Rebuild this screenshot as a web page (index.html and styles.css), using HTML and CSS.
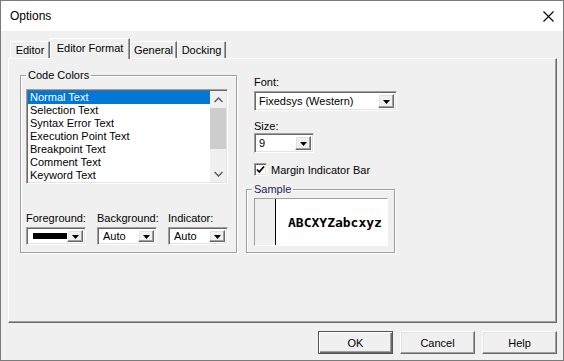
FILE: index.html
```html
<!DOCTYPE html>
<html lang="en">
<head>
  <meta charset="UTF-8">
  <title>Options</title>
  <link rel="stylesheet" href="styles.css">
</head>
<body>
  <div class="window">
    <!-- title bar -->
    <div class="titlebar">
      <span class="title">Options</span>
      <svg class="close" width="11" height="11" viewBox="0 0 11 11">
        <path d="M0.5 0.5 L10.5 10.5 M10.5 0.5 L0.5 10.5" stroke="#000" stroke-width="1.1" fill="none"/>
      </svg>
    </div>

    <div class="client">
      <!-- tabs -->
      <div class="tabs">
        <span class="tab t-editor">Editor</span>
        <span class="tab active t-format">Editor Format</span>
        <span class="tab t-general">General</span>
        <span class="tab t-docking">Docking</span>
      </div>

      <div class="panel">
        <fieldset class="group colors">
          <legend>Code Colors</legend>
          <div class="list">
            <div class="items">
              <div class="item selected">Normal Text</div>
              <div class="item">Selection Text</div>
              <div class="item">Syntax Error Text</div>
              <div class="item">Execution Point Text</div>
              <div class="item">Breakpoint Text</div>
              <div class="item">Comment Text</div>
              <div class="item">Keyword Text</div>
            </div>
            <div class="scrollbar">
              <div class="sb-btn">
                <svg width="9" height="6" viewBox="0 0 9 6"><path d="M0.5 5 L4.5 1 L8.5 5" stroke="#606060" stroke-width="1.5" fill="none"/></svg>
              </div>
              <div class="thumb"></div>
              <div class="track"></div>
              <div class="sb-btn">
                <svg width="9" height="6" viewBox="0 0 9 6"><path d="M0.5 1 L4.5 5 L8.5 1" stroke="#606060" stroke-width="1.5" fill="none"/></svg>
              </div>
            </div>
          </div>

          <div class="pickers">
            <div class="picker">
              <div class="label">Foreground:</div>
              <div class="combo small">
                <div class="value"><span class="swatch"></span></div>
                <div class="drop"><svg width="7" height="4" viewBox="0 0 7 4"><path d="M0 0 H7 L3.5 4 Z" fill="#000"/></svg></div>
              </div>
            </div>
            <div class="picker">
              <div class="label">Background:</div>
              <div class="combo small">
                <div class="value">Auto</div>
                <div class="drop"><svg width="7" height="4" viewBox="0 0 7 4"><path d="M0 0 H7 L3.5 4 Z" fill="#000"/></svg></div>
              </div>
            </div>
            <div class="picker">
              <div class="label">Indicator:</div>
              <div class="combo small">
                <div class="value">Auto</div>
                <div class="drop"><svg width="7" height="4" viewBox="0 0 7 4"><path d="M0 0 H7 L3.5 4 Z" fill="#000"/></svg></div>
              </div>
            </div>
          </div>
        </fieldset>

        <div class="side">
          <div class="label font-label">Font:</div>
          <div class="combo font">
            <div class="value">Fixedsys (Western)</div>
            <div class="drop"><svg width="7" height="4" viewBox="0 0 7 4"><path d="M0 0 H7 L3.5 4 Z" fill="#000"/></svg></div>
          </div>
          <div class="label size-label">Size:</div>
          <div class="combo size">
            <div class="value">9</div>
            <div class="drop"><svg width="7" height="4" viewBox="0 0 7 4"><path d="M0 0 H7 L3.5 4 Z" fill="#000"/></svg></div>
          </div>
          <div class="check">
            <span class="box">
              <svg width="9" height="9" viewBox="0 0 9 9"><path d="M1 4.5 L3.3 7 L8 1.5" stroke="#000" stroke-width="1.8" fill="none"/></svg>
            </span>
            <span>Margin Indicator Bar</span>
          </div>

          <fieldset class="group sample">
            <legend>Sample</legend>
            <div class="sample-box">
              <div class="margin"></div>
              <div class="sample-text">ABCXYZabcxyz</div>
            </div>
          </fieldset>
        </div>
      </div>

      <!-- dialog buttons -->
      <div class="buttons">
        <button class="btn default">OK</button>
        <button class="btn">Cancel</button>
        <button class="btn">Help</button>
      </div>
    </div>
  </div>
</body>
</html>
```

FILE: styles.css
```css
body {
  margin: 0;
  font-family: "Liberation Sans", Arial, sans-serif;
  font-size: 11px;
  color: #000;
}
.window {
  width: 564px;
  height: 361px;
  box-sizing: border-box;
  border: 1px solid #7a7a7a;
  display: flex;
  flex-direction: column;
}
.titlebar {
  height: 30px;
  background: #fff;
  display: flex;
  align-items: center;
  justify-content: space-between;
  padding: 0 9px 0 9px;
}
.title {
  font-size: 12px;
}
.client {
  flex: 1;
  background: #f0f0f0;
  padding: 7px 6px 0 7px;
}

/* tabs */
.tabs {
  display: flex;
  align-items: flex-end;
  height: 20px;
  padding-left: 2px;
}
.tab {
  height: 17px;
  line-height: 17px;
  text-align: center;
  box-sizing: border-box;
  border: 1px solid;
  border-color: #fff #696969 transparent #fff;
  border-bottom: none;
  box-shadow: inset -1px 0 #a0a0a0;
  white-space: nowrap;
  flex: none;
}
.t-editor { width: 40px; }
.t-general { width: 47px; }
.t-docking { width: 49px; }
.tab.active {
  position: relative;
  z-index: 1;
  width: 80px;
  height: 21px;
  line-height: 18px;
  margin-bottom: -1px;
  background: #f0f0f0;
}
.panel {
  height: 265px;
  box-sizing: border-box;
  border: 1px solid;
  border-color: #fff #696969 #696969 #fff;
  box-shadow: inset -1px -1px #a0a0a0;
  display: flex;
  align-items: flex-start;
  padding: 9px 0 0 11px;
}

/* group boxes */
.group {
  margin: 0;
  box-sizing: border-box;
  border: 1px solid #a0a0a0;
  box-shadow: inset 1px 1px #fff, 1px 1px #fff;
}
.group legend {
  padding: 0 2px;
  line-height: 14px;
  background: #f0f0f0;
}
.colors {
  width: 216px;
  padding: 7px 8px 7px 5px;
}
.list {
  display: flex;
  width: 202px;
  height: 95px;
  box-sizing: border-box;
  border: 1px solid;
  border-color: #a0a0a0 #fff #fff #a0a0a0;
  box-shadow: inset 1px 1px #696969, inset -1px -1px #e3e3e3;
  padding: 1px;
  background: #fff;
}
.items {
  flex: 1;
  overflow: hidden;
}
.item {
  height: 13px;
  line-height: 13px;
  padding-left: 2px;
  white-space: nowrap;
}
.item.selected {
  background: #0078d7;
  color: #fff;
}
.scrollbar {
  width: 16px;
  background: #f0f0f0;
  display: flex;
  flex-direction: column;
}
.sb-btn {
  height: 17px;
  display: flex;
  align-items: center;
  justify-content: center;
}
.thumb {
  height: 41px;
  background: #cdcdcd;
}
.track {
  flex: 1;
}
.pickers {
  display: flex;
  gap: 11px;
  margin-top: 27px;
}
.picker {
  width: 60px;
}
.label {
  line-height: 14px;
  margin-bottom: 2px;
  white-space: nowrap;
}

/* combo boxes */
.combo {
  display: flex;
  box-sizing: border-box;
  border: 1px solid;
  border-color: #a0a0a0 #fff #fff #a0a0a0;
  box-shadow: inset 1px 1px #696969, inset -1px -1px #e3e3e3;
  background: #fff;
  padding: 2px;
}
.combo.small {
  width: 60px;
  height: 18px;
}
.combo .value {
  flex: 1;
  display: flex;
  align-items: center;
  padding-left: 2px;
  white-space: nowrap;
}
.combo.small .value {
  padding-left: 3px;
}
.swatch {
  width: 34px;
  height: 6px;
  background: #000;
  margin-left: 1px;
}
.drop {
  width: 16px;
  box-sizing: border-box;
  border: 1px solid;
  border-color: #fff #696969 #696969 #fff;
  box-shadow: inset -1px -1px #a0a0a0, inset 1px 1px #e3e3e3;
  background: #f0f0f0;
  display: flex;
  align-items: center;
  justify-content: center;
}
.drop svg {
  margin-top: 1px;
}

/* right side */
.side {
  width: 149px;
  margin-left: 9px;
  display: flex;
  flex-direction: column;
}
.side .label,
.side .combo,
.side .check {
  margin-left: 8px;
}
.font-label {
  margin-top: 7px;
}
.combo.font {
  width: 143px;
  height: 20px;
}
.size-label {
  margin-top: 8px;
  margin-bottom: 0;
}
.combo.size {
  width: 60px;
  height: 20px;
}
.check {
  margin-top: 10px;
  display: flex;
  align-items: center;
  gap: 4px;
  height: 13px;
}
.check .box {
  width: 13px;
  height: 13px;
  box-sizing: border-box;
  border: 1px solid;
  border-color: #a0a0a0 #fff #fff #a0a0a0;
  box-shadow: inset 1px 1px #696969, inset -1px -1px #e3e3e3;
  background: #fff;
  display: flex;
  align-items: center;
  justify-content: center;
}
.sample {
  margin-top: 6px;
  width: 149px;
  padding: 2px 6px 6px 7px;
}
.sample legend {
  margin-left: -2px;
  color: #1c1c58;
}
.sample-box {
  height: 48px;
  box-sizing: border-box;
  border: 1px solid;
  border-color: #a0a0a0 #fff #fff #a0a0a0;
  background: #fff;
  display: flex;
}
.sample-box .margin {
  width: 20px;
  background: #f0f0f0;
  border-right: 1px solid #000;
}
.sample-text {
  font-family: "DejaVu Sans Mono", "Liberation Mono", monospace;
  font-weight: bold;
  font-size: 13px;
  padding-left: 12px;
  display: flex;
  align-items: center;
}

/* buttons */
.buttons {
  display: flex;
  justify-content: flex-end;
  gap: 7px;
  margin-top: 8px;
}
.btn {
  width: 75px;
  height: 23px;
  font-family: inherit;
  font-size: 11px;
  color: #000;
  background: #f0f0f0;
  border: 1px solid;
  border-color: #fff #696969 #696969 #fff;
  box-shadow: inset -1px -1px #a0a0a0, inset 1px 1px #e3e3e3;
  padding: 0;
}
.btn.default {
  border: 1px solid #555;
  box-shadow: inset 1px 1px #fff, inset -1px -1px #696969, inset -2px -2px #a0a0a0;
}
```
